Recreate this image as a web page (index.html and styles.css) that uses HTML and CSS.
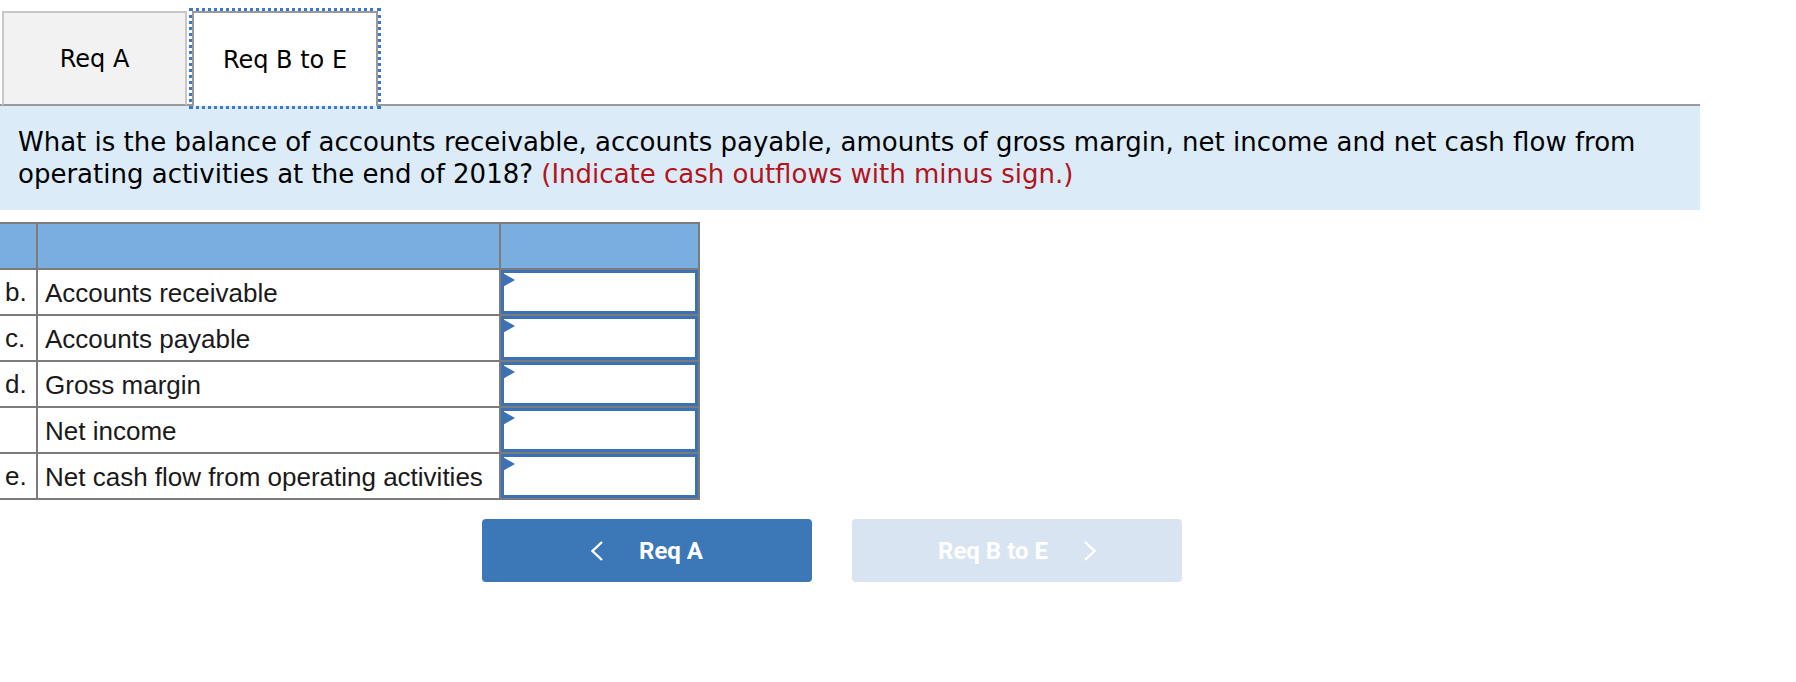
FILE: index.html
```html
<!DOCTYPE html>
<html lang="en">
<head>
    <meta charset="UTF-8">
    <title>Req B to E</title>
    <link rel="stylesheet" href="styles.css">
</head>
<body>
    <!-- Tabs -->
    <div class="tabs">
        <div class="tab">Req A</div>
        <div class="tab active">Req B to E</div>
    </div>

    <!-- Question -->
    <div class="question">
        What is the balance of accounts receivable, accounts payable, amounts of gross margin, net income and net cash flow from operating activities at the end of 2018? <span class="hint">(Indicate cash outflows with minus sign.)</span>
    </div>

    <!-- Answer table -->
    <table class="answers">
        <colgroup>
            <col class="col-letter">
            <col class="col-label">
            <col class="col-input">
        </colgroup>
        <tr class="head">
            <th></th>
            <th></th>
            <th></th>
        </tr>
        <tr>
            <td>b.</td>
            <td class="label">Accounts receivable</td>
            <td class="cell"><div class="answer"><span class="flag"></span></div></td>
        </tr>
        <tr>
            <td>c.</td>
            <td class="label">Accounts payable</td>
            <td class="cell"><div class="answer"><span class="flag"></span></div></td>
        </tr>
        <tr>
            <td>d.</td>
            <td class="label">Gross margin</td>
            <td class="cell"><div class="answer"><span class="flag"></span></div></td>
        </tr>
        <tr>
            <td></td>
            <td class="label">Net income</td>
            <td class="cell"><div class="answer"><span class="flag"></span></div></td>
        </tr>
        <tr>
            <td>e.</td>
            <td class="label">Net cash flow from operating activities</td>
            <td class="cell"><div class="answer"><span class="flag"></span></div></td>
        </tr>
    </table>

    <!-- Navigation -->
    <div class="nav">
        <button class="nav-btn prev">
            <svg width="12" height="20" viewBox="0 0 12 20"><polyline points="11,1 1.5,10 11,19" fill="none" stroke="#fff" stroke-width="2.4"/></svg>
            <span>Req A</span>
        </button>
        <button class="nav-btn next">
            <span>Req B to E</span>
            <svg width="12" height="20" viewBox="0 0 12 20"><polyline points="1,1 10.5,10 1,19" fill="none" stroke="#fff" stroke-width="2.4"/></svg>
        </button>
    </div>
</body>
</html>
```

FILE: styles.css
```css
body {
    margin: 0;
    font-family: "DejaVu Sans", Verdana, sans-serif;
    background-color: #fff;
    color: #000;
}

/* Tabs */
.tabs {
    display: flex;
    width: 1700px;
    padding: 11px 0 0 2px;
    border-bottom: 2px solid #999;
    box-sizing: border-box;
}

.tab {
    width: 185px;
    height: 95px;
    margin-bottom: -2px;
    box-sizing: border-box;
    display: flex;
    align-items: center;
    justify-content: center;
    font-size: 24px;
    background-color: #f2f2f2;
    border: 2px solid #c8c8c8;
    border-bottom-color: #999;
}

.tab.active {
    width: 186px;
    margin-left: 5px;
    background-color: #fff;
    border: 2px solid #999;
    border-bottom: none;
    outline: 3px dotted #3d7ac6;
    outline-offset: 0;
}

/* Question panel */
.question {
    width: 1700px;
    box-sizing: border-box;
    padding: 20px 16px 20px 18px;
    background-color: #dcebf8;
    font-size: 26px;
    line-height: 32px;
}

.hint {
    color: #b3141c;
}

/* Answer table */
.answers {
    margin-top: 12px;
    border-collapse: collapse;
    table-layout: fixed;
    width: 699px;
    font-family: "Liberation Sans", Arial, sans-serif;
    font-size: 26px;
    color: #1a1a1a;
}

.col-letter {
    width: 37px;
}

.col-label {
    width: 463px;
}

.col-input {
    width: 199px;
}

.answers th,
.answers td {
    border: 2px solid #7b7b7b;
    height: 42px;
    padding: 0;
    text-align: left;
    white-space: nowrap;
}

.answers .head th {
    height: 44px;
    background-color: #7aaee1;
}

.answers tr > :first-child {
    border-left: none;
    padding-left: 5px;
}

.answers .label {
    padding-left: 7px;
    padding-top: 2px;
}

.answers .cell {
    vertical-align: top;
}

.answer {
    position: relative;
    height: 44px;
    border: 3px solid #3c71b5;
    box-sizing: border-box;
    background-color: #fff;
}

.flag {
    position: absolute;
    top: -1px;
    left: -3px;
    display: block;
    width: 0;
    height: 0;
    border-left: 14px solid #3c71b5;
    border-top: 8px solid transparent;
    border-bottom: 8px solid transparent;
}

/* Navigation buttons */
.nav {
    display: flex;
    gap: 40px;
    padding-left: 482px;
    margin-top: 19px;
}

.nav-btn {
    width: 330px;
    height: 63px;
    border: none;
    border-radius: 4px;
    display: flex;
    align-items: center;
    justify-content: center;
    gap: 36px;
    padding-top: 2px;
    font-family: Roboto, "Liberation Sans", sans-serif;
    font-weight: 700;
    font-size: 24px;
    color: #fff;
    cursor: pointer;
}

.nav-btn.prev {
    background-color: #3c77b8;
}

.nav-btn.next {
    background-color: #d8e4f1;
}
```
